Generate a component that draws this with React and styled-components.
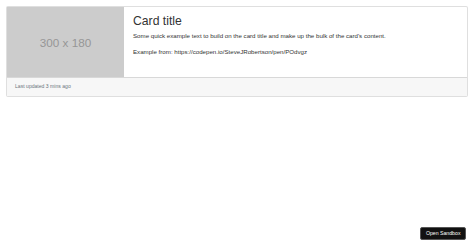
import React from "react";
import styled, { createGlobalStyle } from "styled-components";

const Global = createGlobalStyle`
  html, body { margin: 0; padding: 0; background: #fff; }
  body { font-family: "Liberation Sans", Arial, sans-serif; color: #333; }
`;

const Page = styled.div`
  padding: 6px 6px 0 6px;
`;

const Card = styled.div`
  width: 462px;
  box-sizing: border-box;
  border: 1px solid rgba(0, 0, 0, 0.125);
  border-radius: 2px;
  background: #fff;
  display: flex;
  flex-direction: column;
`;

const Row = styled.div`
  display: flex;
`;

const Placeholder = styled.div`
  width: 117px;
  height: 70px;
  background: #cccccc;
  color: #969696;
  display: flex;
  align-items: center;
  justify-content: center;
  font-size: 11.7px;
  flex-shrink: 0;
`;

const Body = styled.div`
  padding: 7px 9px;
  display: flex;
  flex-direction: column;
`;

const Title = styled.h5`
  margin: 0 0 2px 0;
  font-size: 12.2px;
  font-weight: 400;
  line-height: 1.2;
  color: #333;
`;

const Text = styled.p`
  margin: 0 0 7px 0;
  font-size: 6.15px;
  line-height: 1.6;
  color: #333;
`;

const Footer = styled.div`
  background: #f7f7f7;
  border-top: 1px solid rgba(0, 0, 0, 0.125);
  padding: 0 8px;
  font-size: 5.1px;
  line-height: 1.5;
  color: #6c757d;
  height: 19px;
  box-sizing: border-box;
  display: flex;
  align-items: center;
`;

const SandboxButton = styled.button`
  position: fixed;
  right: 8px;
  bottom: 8px;
  background: #111;
  color: #fff;
  border: 1px solid #555;
  border-radius: 2px;
  font-family: "Liberation Sans", Arial, sans-serif;
  font-size: 5.2px;
  padding: 2.5px 4.5px;
  line-height: 1.2;
`;

export default function App() {
  return (
    <>
      <Global />
      <Page>
        <Card>
          <Row>
            <Placeholder>300 x 180</Placeholder>
            <Body>
              <Title>Card title</Title>
              <Text>
                Some quick example text to build on the card title and make up the bulk of the card's content.
              </Text>
              <Text>Example from: https://codepen.io/SteveJRobertson/pen/POdvgz</Text>
            </Body>
          </Row>
          <Footer>Last updated 3 mins ago</Footer>
        </Card>
      </Page>
      <SandboxButton>Open Sandbox</SandboxButton>
    </>
  );
}
